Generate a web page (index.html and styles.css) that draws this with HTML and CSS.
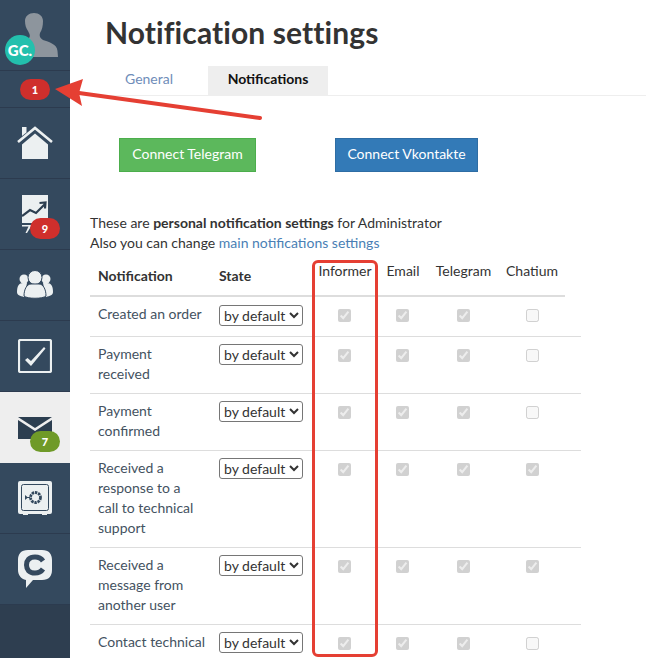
FILE: index.html
```html
<!DOCTYPE html>
<html lang="en">
<head>
<meta charset="utf-8">
<title>Notification settings</title>
<link rel="stylesheet" href="styles.css">
</head>
<body>
<div class="page">
  <nav class="sidebar">
    <div class="nav-item avatar-item">
      <svg class="silhouette" width="36" height="46" viewBox="0 0 36 46"><path d="M1 8C1 3 5 0 10 0s9 3 9 8c0 5-1 9-3 12-1 3 0 5 3 7 6 2 14 4 14.500 11l.5 6H5V25c2-2 0-5-1-7-2-3-3-6-3-10z" fill="#8d959d"/></svg>
      <span class="initials">GC.</span>
    </div>
    <div class="nav-item informer-item"><span class="badge badge-red">1</span></div>
    <div class="nav-item">
      <svg width="36" height="34" viewBox="0 0 36 34"><path d="M5 18.500 18 7.500l13 11V33H5z" fill="#ecf0f1"/><path d="M1 16 18 2l17 14" fill="none" stroke="#ecf0f1" stroke-width="2.600"/><path d="M5 1h4.500v5.500L5 10z" fill="#ecf0f1"/></svg>
    </div>
    <div class="nav-item">
      <svg width="26" height="38" viewBox="0 0 26 38"><path d="M0 0h26v28H0z" fill="#ecf0f1"/><path d="M0 30h13v1.500H9L5 38H3.500l3-6.500H0z" fill="#ecf0f1"/><path d="M0 21l8-6 6 3 9-9M17.500 8l6-.5-.5 6" fill="none" stroke="#2c3e50" stroke-width="2.200"/></svg>
      <span class="badge badge-red badge-item">9</span>
    </div>
    <div class="nav-item">
      <svg width="36" height="30" viewBox="0 0 36 30"><g fill="#ecf0f1"><circle cx="7" cy="9" r="4.500"/><circle cx="29" cy="9" r="4.500"/><path d="M0 22c0-6 2-9 6-9h4l-3 14c-4-1-7-2-7-5zM36 22c0-6-2-9-6-9h-4l3 14c4-1 7-2 7-5z"/><circle cx="18" cy="7.500" r="7" stroke="#34495e"/><path d="M7 26c0-7 3-12 7-12h8c4 0 7 5 7 12-3 3-19 3-22 0z" stroke="#34495e"/></g></svg>
    </div>
    <div class="nav-item">
      <svg width="34" height="34" viewBox="0 0 34 34"><rect x="1" y="1" width="32" height="32" rx="1.500" fill="none" stroke="#ecf0f1" stroke-width="2.200"/><path d="M7 21l2.500-2 3.500 3L26 8l1.500 1.500L13 27z" fill="#ecf0f1"/></svg>
    </div>
    <div class="nav-item nav-active">
      <svg width="34" height="22" viewBox="0 0 34 22"><path d="M0 0h34L17 11z" fill="#2c3e50"/><path d="M0 3v19h34V3L17 14z" fill="#2c3e50"/></svg>
      <span class="badge badge-green badge-item">7</span>
    </div>
    <div class="nav-item">
      <svg width="34" height="34" viewBox="0 0 34 34"><path d="M2 0h30a2 2 0 0 1 2 2v29a2 2 0 0 1-2 2h-3v1h-5v-1H10v1H5v-1H2a2 2 0 0 1-2-2V2a2 2 0 0 1 2-2z" fill="#ecf0f1"/><rect x="3.500" y="3.500" width="27" height="26" rx="2" fill="none" stroke="#34495e"/><circle cx="17.500" cy="16.500" r="5" fill="none" stroke="#34495e" stroke-width="2.800" stroke-dasharray="2.400 .8"/><path d="M7 14l3 2.500-3 2.500z" fill="#34495e"/><path d="M9 16.500h3" stroke="#34495e"/></svg>
    </div>
    <div class="nav-item">
      <svg width="34" height="38" viewBox="0 0 34 38"><path d="M10 0h14c7 0 10 4 10 10v10c0 6-3 10-10 10H15L8 38v-8c-5-1-8-5-8-10V10C0 4 3 0 10 0z" fill="#ecf0f1"/><path d="M25 11c-2-3-5-4-8-4-6 0-8.500 3.500-8.500 8s2.500 8 8.500 8c3 0 6-1 8-4" fill="none" stroke="#34495e" stroke-width="5"/></svg>
    </div>
    <div class="sidebar-rest"></div>
  </nav>
  <main class="content">
    <h1 class="title">Notification settings</h1>
    <div class="tabs">
      <a class="tab">General</a>
      <a class="tab tab-active">Notifications</a>
    </div>
    <div class="connect">
      <a class="btn btn-green">Connect Telegram</a>
      <a class="btn btn-blue">Connect Vkontakte</a>
    </div>
    <p class="intro">These are <b>personal notification settings</b> for Administrator<br>Also you can change <a class="link">main notifications settings</a></p>
    <table class="grid">
      <colgroup><col class="c-name"><col class="c-state"><col class="c-inf"><col class="c-mail"><col class="c-tg"><col class="c-chat"><col class="c-end"></colgroup>
      <thead>
        <tr>
          <th class="h-main">Notification</th><th class="h-main">State</th><th>Informer</th><th>Email</th><th>Telegram</th><th>Chatium</th><th class="h-end"></th>
        </tr>
      </thead>
      <tbody>
        <tr class="first"><td>Created an order</td><td><select><option>by default</option></select></td><td><input type="checkbox" checked disabled></td><td><input type="checkbox" checked disabled></td><td><input type="checkbox" checked disabled></td><td><input type="checkbox" disabled></td><td></td></tr>
        <tr><td>Payment<br>received</td><td><select><option>by default</option></select></td><td><input type="checkbox" checked disabled></td><td><input type="checkbox" checked disabled></td><td><input type="checkbox" checked disabled></td><td><input type="checkbox" disabled></td><td></td></tr>
        <tr><td>Payment<br>confirmed</td><td><select><option>by default</option></select></td><td><input type="checkbox" checked disabled></td><td><input type="checkbox" checked disabled></td><td><input type="checkbox" checked disabled></td><td><input type="checkbox" disabled></td><td></td></tr>
        <tr><td>Received a<br>response to a<br>call to technical<br>support</td><td><select><option>by default</option></select></td><td><input type="checkbox" checked disabled></td><td><input type="checkbox" checked disabled></td><td><input type="checkbox" checked disabled></td><td><input type="checkbox" checked disabled></td><td></td></tr>
        <tr><td>Received a<br>message from<br>another user</td><td><select><option>by default</option></select></td><td><input type="checkbox" checked disabled></td><td><input type="checkbox" checked disabled></td><td><input type="checkbox" checked disabled></td><td><input type="checkbox" checked disabled></td><td></td></tr>
        <tr class="last"><td>Contact technical</td><td><select><option>by default</option></select></td><td><input type="checkbox" checked disabled></td><td><input type="checkbox" checked disabled></td><td><input type="checkbox" checked disabled></td><td><input type="checkbox" disabled></td><td></td></tr>
      </tbody>
    </table>
  </main>
  <div class="highlight"></div>
  <svg class="arrow" width="220" height="50" viewBox="0 0 220 50"><path d="M207 39 26 14" stroke="#e53f33" stroke-width="4" stroke-linecap="round" fill="none"/><path d="M2 10 30 0l-4 14 3 13z" fill="#e53f33"/></svg>
</div>
</body>
</html>
```

FILE: styles.css
```css
* { box-sizing: border-box; }
html, body { margin: 0; padding: 0; height: 100%; overflow: hidden; background: #fff; }
body { font-family: "Lato", "Open Sans", sans-serif; font-size: 14px; line-height: 20px; color: #333; }
.page { position: relative; display: flex; width: 646px; height: 658px; overflow: hidden; }

.sidebar { flex: 0 0 70px; display: flex; flex-direction: column; background: #2e3e50; height: 658px; }
.nav-item { position: relative; flex: 0 0 71px; height: 71px; background: #34495e; border-bottom: 1px solid #2c3b4f; display: flex; align-items: center; justify-content: center; }
.avatar-item { display: block; }
.silhouette { position: absolute; left: 24px; top: 13px; }
.initials { position: absolute; left: 5px; top: 35px; width: 30px; height: 30px; border-radius: 50%; background: #23c0ad; color: #fff; font-weight: 900; font-size: 15px; line-height: 30px; text-align: center; }
.informer-item { flex: 0 0 37px; height: 37px; }
.nav-active { background: #eeeeee; border-bottom: 0; }
.badge { width: 30px; height: 21px; border-radius: 10.5px; color: #fff; font-size: 11px; font-weight: 900; line-height: 21px; text-align: center; }
.badge-red { background: #cf2f2c; }
.badge-green { background: #6f9a28; }
.badge-item { position: absolute; left: 30px; top: 39px; }
.sidebar-rest { flex: 1; }

.content { flex: 1; min-width: 0; padding-left: 20px; }
.title { margin: 14px 0 0 15px; font-size: 30px; line-height: 36px; font-weight: 700; letter-spacing: .1px; color: #333; }
.tabs { display: flex; margin: 16px 0 0 15px; height: 30px; border-bottom: 1px solid #eee; }
.tab { display: block; padding: 0 20px; line-height: 26px; height: 29px; color: #6f8db9; }
.tab-active { margin-left: 15px; padding: 0; width: 120px; text-align: center; background: #eee; color: #111; font-weight: 700; }
.connect { display: flex; gap: 79px; margin: 42px 0 0 29px; }
.btn { display: block; height: 34px; line-height: 30px; padding: 0; color: #fff; border: 1px solid; text-align: center; }
.btn-green { width: 137px; background: #5cb85c; border-color: #4cae4c; }
.btn-blue { width: 143px; background: #337ab7; border-color: #2e6da4; }
.intro { margin: 41px 0 0; }
.link { color: #4a7fb5; }

.grid { table-layout: fixed; width: 491px; margin-top: 5px; border-collapse: collapse; }
.c-name { width: 121px; }
.c-state { width: 101px; }
.c-inf { width: 66px; }
.c-mail { width: 50px; }
.c-tg { width: 71px; }
.c-chat { width: 66px; }
.c-end { width: 16px; }
th { height: 38px; padding: 3px 0 0; font-weight: 400; vertical-align: top; text-align: center; border-bottom: 2px solid #ddd; }
th.h-main { padding: 8px 8px 0; font-weight: 700; text-align: left; }
th.h-end { border-bottom: 0; }
td { padding: 7px 8px 9px; vertical-align: top; text-align: center; border-top: 1px solid #ddd; }
td:nth-child(-n+2) { text-align: left; }
td:nth-child(1) { color: #44525f; padding-right: 0; }
.first td { border-top: 0; padding-bottom: 9px; }
td:nth-child(2) { padding: 7px 0 8px 8px; }
.first td:nth-child(2) { padding: 8px 0 7px 8px; }
td:nth-child(3), td:nth-child(4) { padding-right: 9px; padding-left: 7px; }
select { width: 84px; height: 21px; font: 14px/1 "Lato", "Open Sans", sans-serif; color: #333; background: #fff; border: 1px solid #767676; border-radius: 3px; display: block; }
input { margin: 5px 0 0; width: 13px; height: 13px; }
.last td:first-child { white-space: nowrap; }

.highlight { position: absolute; left: 312px; top: 260px; width: 66px; height: 397px; border: 3px solid #e53f33; border-radius: 6px; }
.arrow { position: absolute; left: 53px; top: 79px; }
```
